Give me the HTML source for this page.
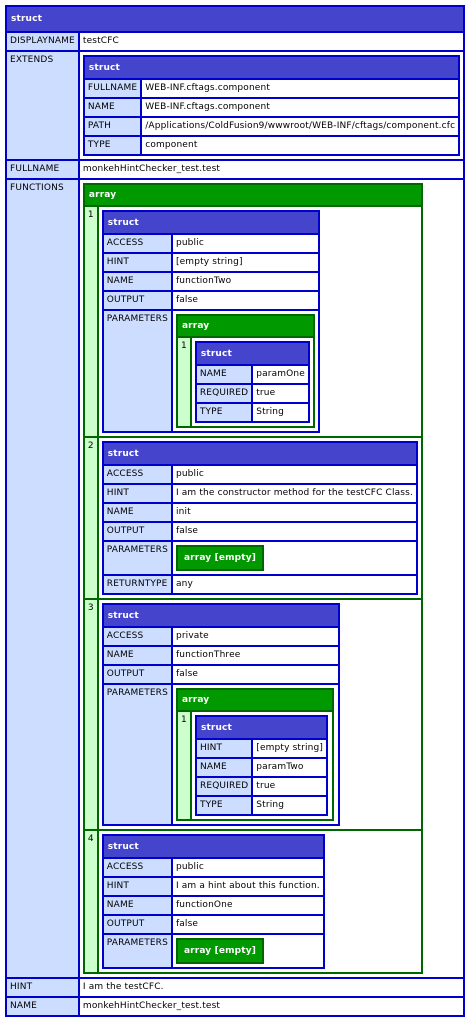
<!DOCTYPE html>
<html><head><style>
body{margin:5px;background:#fff}
table{border-collapse:separate;border-spacing:2px;font:9px "DejaVu Sans",sans-serif;letter-spacing:0.15px;color:#000}
td,th{padding:3px 3px;vertical-align:top;text-align:left;line-height:11px;white-space:nowrap}
td{background:#fff}
.s{background:#0000cc}
.s>tbody>tr>th{background:#4444cc;color:#fff;font-weight:bold;padding:5px 4px 4px;line-height:12px}
.s>tbody>tr>td.k{background:#ccddff}
.a{background:#006600}
.a>tbody>tr>th{background:#009900;color:#fff;font-weight:bold;padding:4px 4px 4px;line-height:12px}
.a>tbody>tr>td.k{background:#ccffcc}
td.n{padding:3px}
.e{background:#006600}
.e th{background:#009900;color:#fff;padding:5px 6px;line-height:12px}
</style></head><body>
<table class="s" style="width:458px">
<tr><th colspan="2" style="padding:6px 4px">struct</th></tr>
<tr><td class="k" style="width:66px">DISPLAYNAME</td><td>testCFC</td></tr>
<tr><td class="k">EXTENDS</td><td class="n">
 <table class="s" style="width:374px">
 <tr><th colspan="2">struct</th></tr>
 <tr><td class="k" style="width:48px">FULLNAME</td><td>WEB-INF.cftags.component</td></tr>
 <tr><td class="k">NAME</td><td>WEB-INF.cftags.component</td></tr>
 <tr><td class="k">PATH</td><td>/Applications/ColdFusion9/wwwroot/WEB-INF/cftags/component.cfc</td></tr>
 <tr><td class="k">TYPE</td><td>component</td></tr>
 </table></td></tr>
<tr><td class="k">FULLNAME</td><td>monkehHintChecker_test.test</td></tr>
<tr><td class="k">FUNCTIONS</td><td class="n">
 <table class="a" style="width:336px">
 <tr><th colspan="2">array</th></tr>
 <tr><td class="k" style="width:6px">1</td><td class="n">
  <table class="s" style="width:217px">
  <tr><th colspan="2">struct</th></tr>
  <tr><td class="k" style="width:61px">ACCESS</td><td>public</td></tr>
  <tr><td class="k">HINT</td><td>[empty string]</td></tr>
  <tr><td class="k">NAME</td><td>functionTwo</td></tr>
  <tr><td class="k">OUTPUT</td><td>false</td></tr>
  <tr><td class="k">PARAMETERS</td><td class="n">
   <table class="a" style="width:139px">
   <tr><th colspan="2">array</th></tr>
   <tr><td class="k" style="width:6px">1</td><td class="n">
    <table class="s" style="width:114px">
    <tr><th colspan="2">struct</th></tr>
    <tr><td class="k">NAME</td><td>paramOne</td></tr>
    <tr><td class="k">REQUIRED</td><td>true</td></tr>
    <tr><td class="k">TYPE</td><td>String</td></tr>
    </table></td></tr>
   </table></td></tr>
  </table></td></tr>
 <tr><td class="k">2</td><td class="n">
  <table class="s" style="width:312px">
  <tr><th colspan="2">struct</th></tr>
  <tr><td class="k" style="width:61px">ACCESS</td><td>public</td></tr>
  <tr><td class="k">HINT</td><td>I am the constructor method for the testCFC Class.</td></tr>
  <tr><td class="k">NAME</td><td>init</td></tr>
  <tr><td class="k">OUTPUT</td><td>false</td></tr>
  <tr><td class="k">PARAMETERS</td><td class="n"><table class="e"><tr><th>array [empty]</th></tr></table></td></tr>
  <tr><td class="k">RETURNTYPE</td><td>any</td></tr>
  </table></td></tr>
 <tr><td class="k">3</td><td class="n">
  <table class="s" style="width:238px">
  <tr><th colspan="2">struct</th></tr>
  <tr><td class="k" style="width:61px">ACCESS</td><td>private</td></tr>
  <tr><td class="k">NAME</td><td>functionThree</td></tr>
  <tr><td class="k">OUTPUT</td><td>false</td></tr>
  <tr><td class="k">PARAMETERS</td><td class="n">
   <table class="a" style="width:158px">
   <tr><th colspan="2">array</th></tr>
   <tr><td class="k" style="width:6px">1</td><td class="n">
    <table class="s" style="width:133px">
    <tr><th colspan="2">struct</th></tr>
    <tr><td class="k">HINT</td><td>[empty string]</td></tr>
    <tr><td class="k">NAME</td><td>paramTwo</td></tr>
    <tr><td class="k">REQUIRED</td><td>true</td></tr>
    <tr><td class="k">TYPE</td><td>String</td></tr>
    </table></td></tr>
   </table></td></tr>
  </table></td></tr>
 <tr><td class="k">4</td><td class="n">
  <table class="s" style="width:221px">
  <tr><th colspan="2">struct</th></tr>
  <tr><td class="k" style="width:61px">ACCESS</td><td>public</td></tr>
  <tr><td class="k">HINT</td><td>I am a hint about this function.</td></tr>
  <tr><td class="k">NAME</td><td>functionOne</td></tr>
  <tr><td class="k">OUTPUT</td><td>false</td></tr>
  <tr><td class="k">PARAMETERS</td><td class="n"><table class="e"><tr><th>array [empty]</th></tr></table></td></tr>
  </table></td></tr>
 </table></td></tr>
<tr><td class="k">HINT</td><td>I am the testCFC.</td></tr>
<tr><td class="k">NAME</td><td>monkehHintChecker_test.test</td></tr>
</table>
</body></html>
